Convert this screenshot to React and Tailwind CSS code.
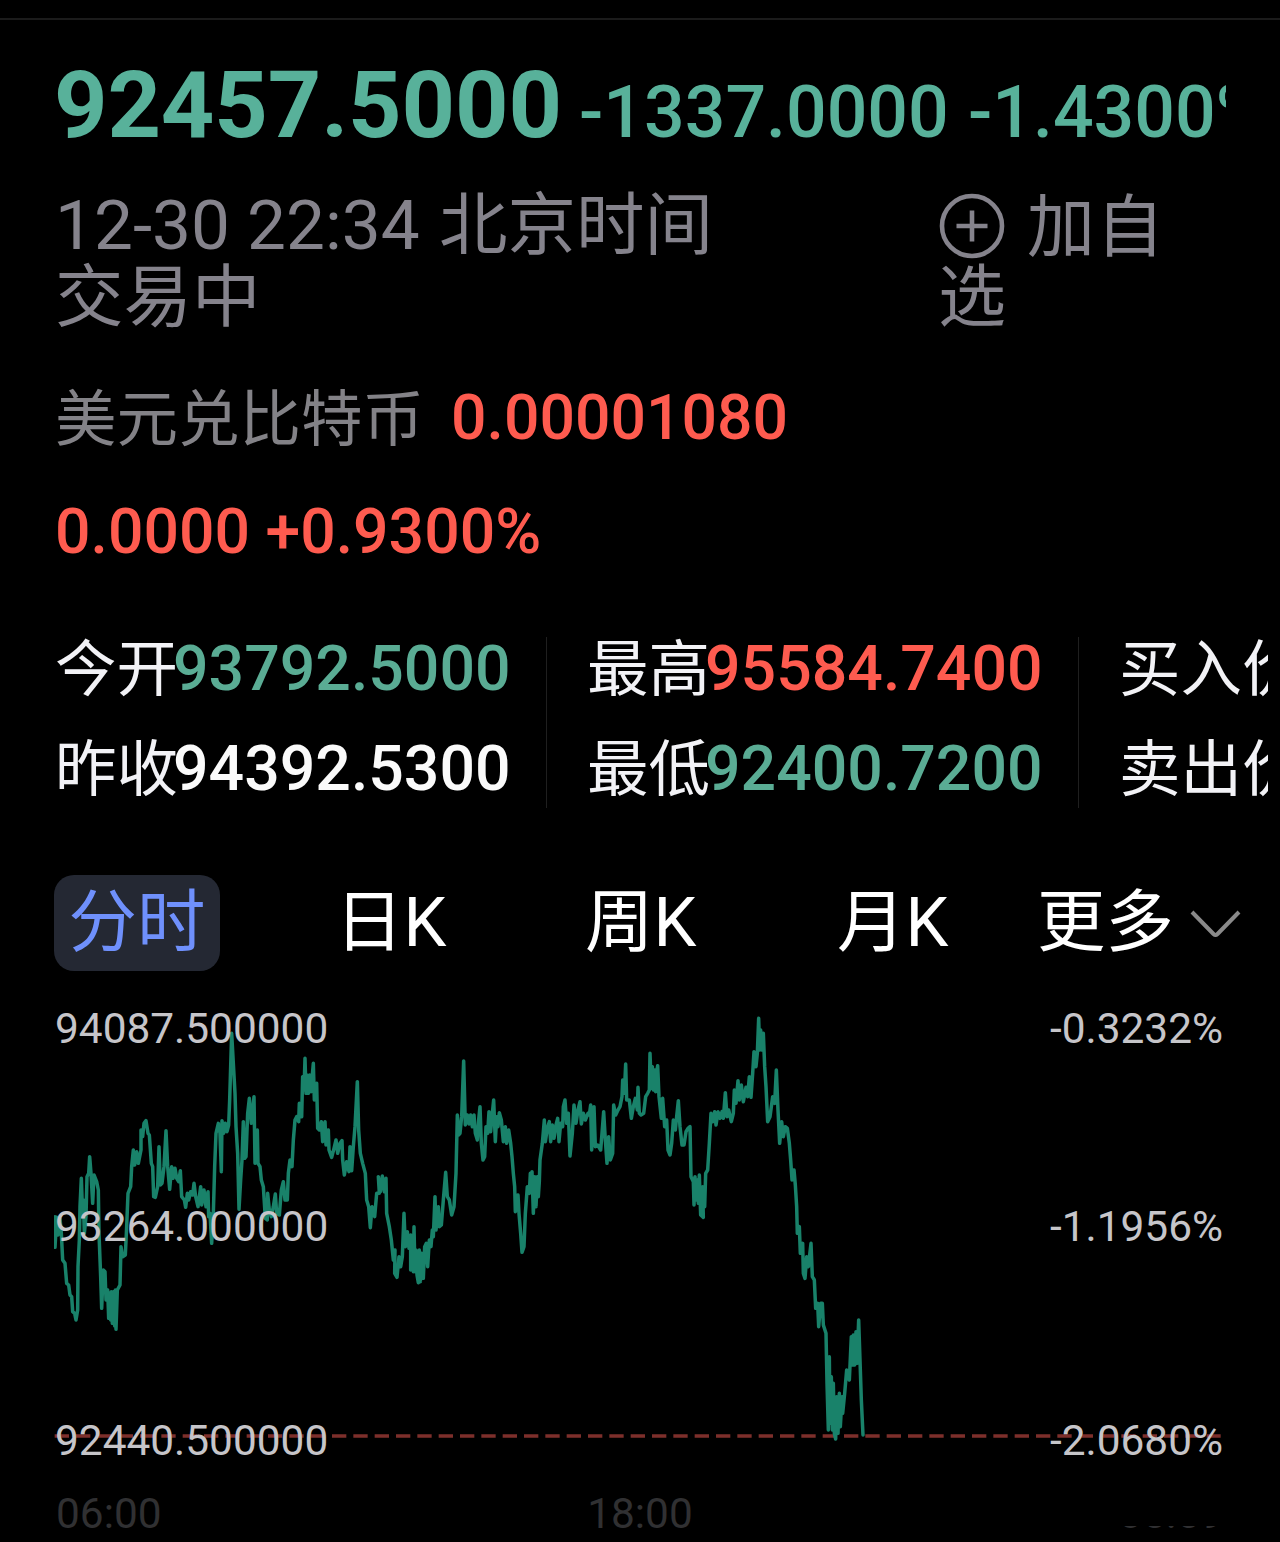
const SERIES = [
  [-42, "45,650 45,742 50,652 54,705 60,655 64,700 68,780 75,790 80,850 86,855 90,885 95,890 98,935 104,940 108,960 113,930 114,800 118,720 120,620 124,535 128,650 130,600 133,700 138,650 141,530 146,520 149,470 153,520 158,610 162,525 170,545 175,570 177,700 182,830 185,925 190,810 195,815 198,900 203,870 206,955 209,880 212,960 214,875 217,970 220,875 224,978 226,870 228,988 232,870 240,855 243,740 248,770 256,765 260,680 264,580 272,560 275,500 280,450 284,495 290,455 295,490 303,450 303,390 308,410 312,370 318,362 324,400 328,405 334,490 338,500 341,590 346,592 353,560 357,440 361,555 366,550 372,500 378,392 383,500 389,568 395,500 399,535 405,505 410,535 416,545 421,512 425,590 433,600 437,622 442,580 446,600 452,575 458,585 462,550 467,590 474,620 482,560 485,615 492,570 498,620 504,575 506,650 510,640 515,730 520,640 524,500 528,400 535,370 540,400 544,515 546,362 551,400 556,370 561,395 566,375 569,300 575,100"],
  [438, "105,280 108,380 113,460 117,628 122,540 126,480 130,365 134,475 138,470 143,340 148,295 154,370 162,290 165,490 172,390 174,490 180,500 184,540 190,560 196,655 202,660 203,580 208,630 214,650 220,620 226,582 230,640 238,645 244,570 250,545 255,600 262,600 265,520 270,480 276,500 280,420 285,360 290,350 296,365 298,310 305,350 308,230 312,270 315,175 318,280 321,225 325,280 329,225 333,275 337,225 340,190 343,300 350,250 353,385 358,390 364,365 368,425 375,365 378,435 385,390 387,450 395,472 402,445 408,420 413,460 420,430 426,422 428,480 433,525 440,485 447,515 450,440 455,512 460,440 465,380 472,245 476,390 481,460 488,490 496,520 500,600 506,620 511,683 516,620 524,650 530,580 538,580 535,530 541,575 547,528 553,575 558,535 560,640 568,680 574,720 580,780 585,750 584,820 591,832 597,770 602,800 607,770 612,640 616,740 622,695 627,745 632,705 632,810 636,720 640,815 642,680 645,815 648,750 651,825 655,848 658,750 661,845 665,760 670,835 674,740 679,730 683,800 688,720 693,740 697,690 700,710 705,590 708,690 715,620 718,680 724,675 730,600 737,517 742,590 748,600 755,645 762,620 768,520"],
  [1158, "52,345 56,405 60,400 65,350 71,183 76,375 82,345 87,372 92,345 97,380 102,345 106,400 112,420 116,360 120,320 124,430 129,480 134,470 138,380 143,400 147,335 152,395 157,340 161,300 166,425 170,350 174,380 178,338 184,360 190,425 196,380 200,430 206,390 212,430 216,470 220,520 224,560 226,635 234,585 237,640 242,700 246,757 252,740 256,640 262,560 268,580 271,520 276,570 276,515 280,640 284,530 288,620 292,530 295,590 298,545 300,480 307,430 313,360 316,425 322,385 328,365 332,425 337,375 342,415 348,375 353,355 357,425 362,370 368,380 370,320 375,300 380,370 385,340 390,468 397,400 402,315 408,370 414,330 420,305 424,372 430,340 436,360 444,340 448,345 452,315 455,450 462,320 466,440 473,435 482,450 486,400 491,335 496,420 501,490 506,410 511,480 518,460 521,315 527,345 534,330 540,320 546,290 548,240 553,280 557,192 560,300 568,300 574,355 580,320 586,295 592,330 594,262 598,340 603,345 611,340 617,290 623,280 628,270"],
  [1758, "30,160 34,265 37,200 40,270 44,210 47,275 50,215 53,197 57,290 64,355 68,295 74,380 80,360 84,450 90,465 95,430 100,360 106,390 110,350 115,302 120,380 126,435 132,435 138,395 144,385 150,380 153,530 160,545 162,615 165,530 168,600 172,540 175,610 178,525 182,645 190,652 188,560 194,620 197,520 203,510 208,430 213,340 218,365 224,335 228,375 234,335 240,355 246,335 250,355 256,278 261,350 266,330 274,365 280,340 283,270 288,310 294,242 298,300 304,255 310,305 318,262 323,290 328,230 333,292 338,220 342,155 348,200 352,160 356,55 359,150 362,90 365,150 370,100 374,200 378,260 383,365 390,350 398,290 404,310 409,210 414,330 419,430 425,365 430,410 436,380 442,385 448,430 452,480 456,540 462,510 466,555 470,620 472,700 478,680 481,760 488,730 490,820 495,835 500,770 505,800 513,730 517,830 523,840 527,925 533,910 536,980 542,910 547,910 550,975 558,1000 561,1150 565,1290 568,1070 570,1270 574,1130 577,1290 580,1150 583,1300 587,1317 590,1190 594,1300 598,1180 601,1280 606,1190 608,1240 614,1180 620,1110 628,1140 634,1010 637,1095 640,1005 644,1095 648,995 651,1090 656,960 660,1080 664,1200 669,1305"],
];

const LINE = SERIES.flatMap(([dx, pts]) =>
  pts.split(" ").map((p) => {
    const [x, y] = p.split(",").map(Number);
    return `${x + dx},${y}`;
  })
).join(" ");

function Stat({ label, value, tone }) {
  return (
    <div className="flex h-[100px] items-center whitespace-nowrap leading-[100px]">
      <span className="w-[118px] shrink-0 pt-[2px] text-[61.5px] text-[#f2f2f6]">{label}</span>
      <span className={`text-[62.6px] font-medium ${tone}`}>{value}</span>
    </div>
  );
}

function Header() {
  return (
    <div className="ml-[54px] mt-[35px] flex h-[100px] w-[1172px] items-baseline overflow-hidden whitespace-nowrap leading-[100px] text-[#58b19a]">
      <span className="w-[525px] shrink-0 text-[93.4px] font-bold tracking-[-0.15px]">92457.5000</span>
      <span className="w-[389px] shrink-0 text-[71.6px] font-medium">-1337.0000</span>
      <span className="text-[71.6px] font-medium">-1.4300%</span>
    </div>
  );
}

function Meta() {
  return (
    <div className="mt-[35px] flex h-[144px] pl-[55px] text-[69.3px] leading-[72px] text-[#85838c]">
      <div className="w-[884px]">
        <div>
          12-30 22:34 <span className="ml-[2px] text-[68.5px]">北京时间</span>
        </div>
        <div className="text-[68.5px]">交易中</div>
      </div>
      <div className="text-[68px]">
        <div className="flex h-[72px] items-center">
          <svg className="h-[66px] w-[66px]" viewBox="0 0 66 66" fill="none" stroke="currentColor" strokeWidth="4.6">
            <circle cx="33" cy="33" r="30" />
            <path d="M33 17.5v31M17.5 33h31" />
          </svg>
          <span className="ml-[22px] mt-[4px] tracking-[1px]">加自</span>
        </div>
        <div className="-ml-px">选</div>
      </div>
    </div>
  );
}

function Tabs() {
  return (
    <div className="mt-[56px] flex h-[96px] items-center whitespace-nowrap pl-[54px] text-[68.4px] leading-[96px] text-white">
      <div className="h-[96px] w-[166px] rounded-[20px] bg-[#242833] text-center text-[#6f90fc]">分时</div>
      <div className="ml-[115px] w-[113px]">日K</div>
      <div className="ml-[137px] w-[112px]">周K</div>
      <div className="ml-[140px] w-[112px]">月K</div>
      <div className="ml-[88px] w-[138px]">更多</div>
      <svg className="ml-[15px] h-[30px] w-[52px]" viewBox="0 0 52 30" fill="none" stroke="#8a8a8a" strokeWidth="4">
        <path d="M2 4 L23.500 26 Q25.500 28 27.500 26 L49 4" />
      </svg>
    </div>
  );
}

function Chart() {
  return (
    <div className="ml-[54px] mt-[29px] grid h-[480px] w-[1169px] text-[42.4px] leading-[56px] text-[#c6c5c9]">
      <svg className="col-start-1 row-start-1 h-[480px] w-[1169px]" viewBox="0 0 3507 1440">
        <path d="M2 1308H3500" stroke="#7d2f2b" strokeWidth="11" strokeDasharray="43 21" />
        <polyline points={LINE} fill="none" stroke="#19826a" strokeWidth="10.5" strokeLinejoin="round" strokeLinecap="round" />
      </svg>
      <div className="col-start-1 row-start-1 pt-px">
        <div className="flex h-[198px] justify-between"><span className="ml-px">94087.500000</span><span>-0.3232%</span></div>
        <div className="flex h-[214px] justify-between"><span className="ml-px">93264.000000</span><span>-1.1956%</span></div>
        <div className="flex justify-between"><span className="ml-px">92440.500000</span><span>-2.0680%</span></div>
      </div>
    </div>
  );
}

export default function App() {
  return (
    <div className="h-[1542px] w-[1280px] overflow-hidden bg-black font-['Roboto','Noto_Sans_CJK_SC',sans-serif]">
      <div className="h-[20px] border-b-2 border-[#1b1b1b]" />
      <Header />
      <Meta />
      <div className="mt-[34px] flex h-[100px] items-center whitespace-nowrap pl-[55px] leading-[100px]">
        <span className="w-[396px] pt-[4px] text-[61.5px] text-[#838287]">美元兑比特币</span>
        <span className="text-[62.5px] font-medium text-[#fe5b4f]">0.00001080</span>
      </div>
      <div className="mt-[14px] h-[100px] whitespace-nowrap pl-[55px] text-[62.5px] font-medium leading-[100px] text-[#fe5b4f]">
        0.0000 +0.9300%
      </div>
      <div className="mt-[37px] flex w-[1268px] overflow-hidden pl-[55px]">
        <div className="w-[532px] shrink-0">
          <Stat label="今开" value="93792.5000" tone="text-[#5aac94]" />
          <Stat label="昨收" value="94392.5300" tone="text-[#fafafa]" />
        </div>
        <div className="-ml-[41px] mr-[40px] mt-[18px] h-[171px] w-px shrink-0 bg-[#1f1f1f]" />
        <div className="w-[532px] shrink-0">
          <Stat label="最高" value="95584.7400" tone="text-[#fe5b4f]" />
          <Stat label="最低" value="92400.7200" tone="text-[#5aac94]" />
        </div>
        <div className="-ml-[41px] mr-[40px] mt-[18px] h-[171px] w-px shrink-0 bg-[#1f1f1f]" />
        <div className="shrink-0 pt-px text-[61.5px] leading-[100px] text-[#f2f2f6]">
          <div className="h-[100px]">买入价</div>
          <div className="h-[99px]">卖出价</div>
        </div>
      </div>
      <Tabs />
      <Chart />
      <div className="ml-[56px] mt-[6px] flex h-[56px] w-[1168px] justify-between text-[42.4px] leading-[56px] text-[#303032]">
        <span>06:00</span>
        <span>18:00</span>
        <span className="relative">
          05:59
          <span className="absolute inset-x-0 top-0 h-[40px] bg-black" />
        </span>
      </div>
    </div>
  );
}
